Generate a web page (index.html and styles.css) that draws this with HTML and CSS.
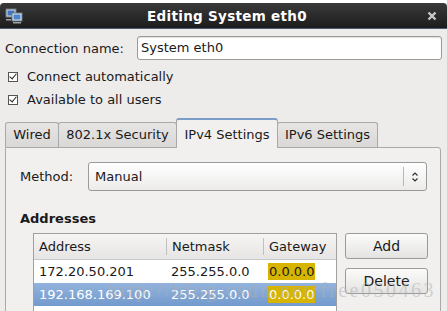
FILE: index.html
```html
<html>
  <head>
    <link rel="stylesheet" href="styles.css">
  </head>
  <body>
    <div class="window">
      <div class="titlebar">
        <svg class="app-icon" width="18" height="16" viewBox="0 0 18 16">
          <rect x="1" y="1" width="10" height="8" fill="#cfd6de" stroke="#6a7480"/>
          <rect x="2.5" y="2.5" width="7" height="5" fill="#3f78c0"/>
          <rect x="7" y="5" width="10" height="8" fill="#dfe4ea" stroke="#6a7480"/>
          <rect x="8.5" y="6.5" width="7" height="5" fill="#4a86d0"/>
          <rect x="8" y="14" width="8" height="1.5" fill="#9aa2ac"/>
          <rect x="1" y="11" width="5" height="1.5" fill="#9aa2ac"/>
        </svg>
        <span class="title">Editing System eth0</span>
        <svg class="close" width="10" height="10" viewBox="0 0 10 10">
          <path d="M1.5 1.5 L8.5 8.5 M8.5 1.5 L1.5 8.5" stroke="#c8c8c8" stroke-width="2.4"/>
        </svg>
      </div>

      <div class="body">
        <div class="name-row">
          <span class="name-label">Connection name:</span>
          <div class="entry">System eth0</div>
        </div>

        <div class="checks">
          <div class="check-row">
            <span class="check"></span>
            <span>Connect automatically</span>
          </div>
          <div class="check-row">
            <span class="check"></span>
            <span>Available to all users</span>
          </div>
        </div>

        <div class="tabs">
          <div class="tab tab-wired">Wired</div>
          <div class="tab tab-security">802.1x Security</div>
          <div class="tab tab-ipv4 active">IPv4 Settings</div>
          <div class="tab tab-ipv6">IPv6 Settings</div>
        </div>

        <div class="panel">
          <div class="method-row">
            <span class="method-label">Method:</span>
            <div class="combo">
              <span class="combo-text">Manual</span>
              <span class="combo-arrow">
                <svg width="8" height="12" viewBox="0 0 8 12">
                  <path d="M1.5 4.5 L4 2 L6.5 4.5 M1.5 7.5 L4 10 L6.5 7.5" fill="none" stroke="#333" stroke-width="1.2"/>
                </svg>
              </span>
            </div>
          </div>

          <div class="section">Addresses</div>

          <div class="addr-area">
            <div class="table">
              <div class="row head">
                <div class="cell c1">Address</div>
                <div class="cell c2">Netmask</div>
                <div class="cell c3">Gateway</div>
              </div>
              <div class="row">
                <div class="cell c1">172.20.50.201</div>
                <div class="cell c2">255.255.0.0</div>
                <div class="cell c3"><span class="gw">0.0.0.0</span></div>
              </div>
              <div class="row selected">
                <div class="cell c1">192.168.169.100</div>
                <div class="cell c2">255.255.0.0</div>
                <div class="cell c3"><span class="gw">0.0.0.0</span></div>
              </div>
            </div>
            <div class="buttons">
              <div class="button">Add</div>
              <div class="button">Delete</div>
            </div>
          </div>
        </div>
      </div>
    </div>
    <div class="watermark">http://blog.csdn.net/free050463</div>
  </body>
</html>
```

FILE: styles.css
```css
body {
  margin: 0;
  background: #ffffff;
  font-family: "DejaVu Sans", sans-serif;
  font-size: 13px;
  color: #1a1a1a;
  overflow: hidden;
  height: 311px;
}
.window {
  margin-top: 3px;
  background: #edeceb;
  height: 308px;
  overflow: hidden;
}
.titlebar {
  height: 25px;
  display: flex;
  align-items: center;
  background: linear-gradient(#3a3a3a, #1c1c1c);
  border-bottom: 1px solid #4a5a70;
  border-radius: 4px 4px 0 0;
}
.app-icon {
  margin-left: 5px;
}
.title {
  flex: 1;
  text-align: center;
  color: #ffffff;
  font-weight: bold;
  font-size: 13.5px;
  letter-spacing: 0.3px;
  margin-left: 4px;
}
.close {
  margin-right: 10px;
}
.body {
  padding: 7px 5px 0 5px;
}
.name-row {
  display: flex;
  align-items: center;
  height: 24px;
}
.name-label {
  width: 132px;
}
.entry {
  flex: 1;
  height: 22px;
  line-height: 22px;
  background: #ffffff;
  border: 1px solid #9a9a9a;
  border-radius: 3px;
  padding-left: 3px;
  box-shadow: inset 0 1px 1px #e0e0e0;
}
.checks {
  margin-top: 5px;
}
.check-row {
  display: flex;
  align-items: center;
  height: 23px;
  padding-left: 3px;
}
.check {
  width: 8px;
  height: 8px;
  border: 1px solid #555;
  background: #fff;
  margin-right: 9px;
  position: relative;
}
.check:after {
  content: '';
  position: absolute;
  left: 2px;
  top: -1px;
  width: 3px;
  height: 6px;
  border-right: 1.5px solid #222;
  border-bottom: 1.5px solid #222;
  transform: rotate(40deg);
}
.tabs {
  display: flex;
  align-items: flex-end;
  height: 29px;
  margin-top: 7px;
  position: relative;
  z-index: 1;
}
.tab {
  box-sizing: border-box;
  height: 25px;
  line-height: 24px;
  text-align: center;
  border: 1px solid #a9a9a9;
  border-bottom: none;
  border-radius: 3px 3px 0 0;
  background: linear-gradient(#e6e5e4, #d9d8d6);
  margin-right: -1px;
}
.tab-wired { width: 54px; }
.tab-security { width: 119px; }
.tab-ipv4 { width: 102px; }
.tab-ipv6 { width: 101px; }
.tab.active {
  height: 30px;
  line-height: 29px;
  background: #f1f0ef;
  border-top: 2px solid #7a9cc6;
  margin-bottom: -1px;
}
.panel {
  border: 1px solid #a9a9a9;
  border-radius: 0 3px 0 0;
  background: #f1f0ef;
  margin-right: 1px;
  height: 200px;
  padding: 14px 13px 0 14px;
}
.method-row {
  display: flex;
  align-items: center;
}
.method-label {
  width: 68px;
}
.combo {
  flex: 1;
  height: 27px;
  display: flex;
  align-items: center;
  border: 1px solid #9a9a9a;
  border-radius: 3px;
  background: linear-gradient(#ffffff, #ecebea);
}
.combo-text {
  flex: 1;
  padding-left: 6px;
}
.combo-arrow {
  width: 22px;
  height: 19px;
  border-left: 1px solid #b8b8b8;
  display: flex;
  align-items: center;
  justify-content: center;
}
.section {
  font-weight: bold;
  margin-top: 20px;
}
.addr-area {
  display: flex;
  margin-top: 7px;
  padding-left: 13px;
}
.table {
  width: 302px;
  height: 80px;
  border: 1px solid #a0a0a0;
  background: #ffffff;
}
.row {
  display: flex;
  height: 23px;
  align-items: center;
}
.row.head {
  height: 25px;
  background: linear-gradient(#f6f5f4, #e6e5e4);
  border-bottom: 1px solid #c8c8c8;
}
.cell {
  padding-left: 5px;
  box-sizing: border-box;
  white-space: nowrap;
}
.c1 { width: 132px; }
.c2 { width: 97px; }
.c3 { width: 73px; }
.head .c2,
.head .c3 {
  border-left: 1px solid #c0c0c0;
  height: 17px;
  line-height: 17px;
}
.row.selected {
  background: linear-gradient(#92b3dc, #739acd);
  color: #ffffff;
}
.gw {
  background: #d6b400;
  color: #1a1a1a;
  padding: 1px 1px;
}
.selected .gw {
  color: #ffffff;
}
.buttons {
  margin-left: 8px;
  display: flex;
  flex-direction: column;
  gap: 9px;
}
.button {
  width: 81px;
  height: 24px;
  line-height: 24px;
  text-align: center;
  border: 1px solid #9a9a9a;
  border-radius: 3px;
  background: linear-gradient(#fbfbfa, #e4e3e2);
  font-size: 14px;
}
.watermark {
  position: absolute;
  right: 11px;
  top: 279px;
  font-family: "Liberation Serif", serif;
  font-size: 20px;
  color: rgba(175, 175, 175, 0.5);
  letter-spacing: 2.5px;
  white-space: nowrap;
}
```
